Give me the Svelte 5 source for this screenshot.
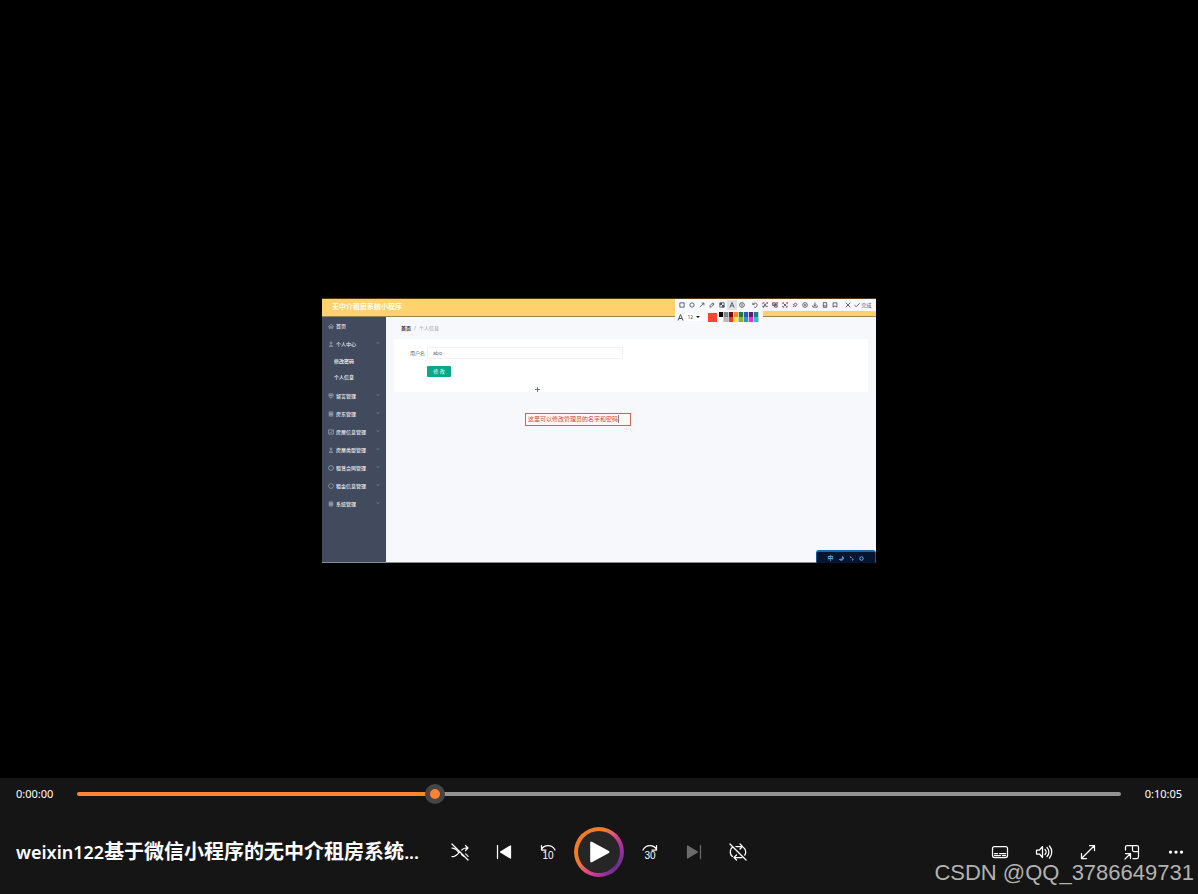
<script>
  let position = $state(34);
  let userName = $state('abo');

  const menu = [
    { label: '首页', icon: 'home', chevron: null },
    { label: '个人中心', icon: 'user', chevron: 'up', children: ['修改密码', '个人信息'] },
    { label: '留言管理', icon: 'shield', chevron: 'down' },
    { label: '房东管理', icon: 'list', chevron: 'down' },
    { label: '房屋信息管理', icon: 'check', chevron: 'down' },
    { label: '房屋类型管理', icon: 'user', chevron: 'down' },
    { label: '租赁合同管理', icon: 'circle', chevron: 'down' },
    { label: '租金信息管理', icon: 'power', chevron: 'down' },
    { label: '系统管理', icon: 'list', chevron: 'down' }
  ];

  const menuIcons = {
    home: 'M1 6 5 2l4 4M2 5v4h2V6h2v3h2V5',
    user: 'M5 1.5a1.6 1.6 0 1 1 0 3.3 1.6 1.6 0 0 1 0-3.3M1.5 9h7M2.5 8.5C3 6 7 6 7.500 8.500',
    shield: 'M1.500 1.500h7v4L5 9 1.500 5.500zM2 4h6M5 2v6',
    list: 'M2 1.500h6v7H2zM2 4h6M2 6h6M5 2v6',
    check: 'M1 1.500h8v7H1zM3 5l1.500 1.500L8 3',
    circle: 'M5 1a4 4 0 1 1 0 8 4 4 0 0 1 0-8',
    power: 'M3.500 1.300a4 4 0 1 0 3 0M5 0v2'
  };

  const tools = [
    { name: '矩形', d: 'M2 2h10v10H2z' },
    { name: '椭圆', d: 'M7 2a5 5 0 1 1 0 10A5 5 0 0 1 7 2' },
    { name: '箭头', d: 'M2 12 11 3M6 2.500h5.500V8' },
    { name: '画笔', d: 'M2 12l1-4 6-6 3 3-6 6zM8 4l3 3' },
    { name: '马赛克', d: 'M2 2h10v10H2z', fill: 'M2 2h5v5H2zM7 7h5v5H7z' },
    { name: '文字', d: 'M2 13 7 1l5 12M4 9h6', active: true },
    { name: '序号', d: 'M7 1.500a5.500 5.500 0 1 1 0 11 5.500 5.500 0 0 1 0-11M6 5l1-1v6' },
    { name: '撤销', d: 'M2 2v4h4M2.500 5.500A5 5 0 1 1 5 12', gap: true },
    { name: '识别文字', d: 'M2 5V2h3M2 9v3h3M12 9v3M4 11l3-7 3 7M5 9h4', hot: true },
    { name: '翻译', d: 'M1 2h7v6H1zM6 6h6v6H6zM3 5h3M8 9h3', hot: true },
    { name: '扫码', d: 'M2 5V2h3M2 9v3h3M12 9v3H9M4 4l6 6M10 4l-6 6', hot: true },
    { name: '固定', d: 'M8 2l4 4-2 1-2 4-5-5 4-2zM5 9l-3 3' },
    { name: '录屏', d: 'M7 1.500a5.500 5.500 0 1 1 0 11 5.500 5.500 0 0 1 0-11', fill: 'M5 5h4v4H5z' },
    { name: '下载', d: 'M7 1v8M4 6l3 3 3-3M2 8v4h10V8' },
    { name: '发送到手机', d: 'M3 1.500h8v11H3zM3 9h8' },
    { name: '收藏', d: 'M2.500 2h9v10L7 9l-4.500 3z' },
    { name: '关闭', d: 'M2 2l10 10M12 2 2 12', gap: true }
  ];

  const swatches = [
    '#050505', '#828282', '#7c0d0d', '#ef8734', '#267a32', '#2b56c4', '#6b1676', '#0f8585',
    '#ffffff', '#b9b9b9', '#ea3a36', '#fff01f', '#8db71c', '#3d8ad6', '#e22fe6', '#25c4cb'
  ];
</script>

<main class="player">
  <section class="stage" aria-label="视频画面">
    <div class="video">
      <header class="app-head">无中介租房系统小程序</header>
      <div class="app-body">
        <nav class="side">
          {#each menu as item}
            <button class="side-row">
              <svg viewBox="0 0 10 10" class="side-icon"><path d={menuIcons[item.icon]} /></svg>
              <span>{item.label}</span>
              {#if item.chevron}
                <svg viewBox="0 0 6 6" class="chevron"><path d={item.chevron === 'up' ? 'M1 4l2-2 2 2' : 'M1 2l2 2 2-2'} /></svg>
              {/if}
            </button>
            {#if item.children}
              <div class="side-sub">
                {#each item.children as child}<button>{child}</button>{/each}
              </div>
            {/if}
          {/each}
        </nav>
        <div class="content">
          <div class="crumbs"><b>首页</b><span>/</span><span>个人信息</span></div>
          <form class="card" onsubmit={(e) => e.preventDefault()}>
            <div class="field">
              <label for="user-name">用户名</label>
              <input id="user-name" bind:value={userName} />
            </div>
            <button class="submit">修 改</button>
          </form>
        </div>
      </div>

      <div class="annotation">这里可以修改管理员的名字和密码<i></i></div>
      <svg class="pointer" viewBox="0 0 6 6"><path d="M3 0v6M0 3h6" /></svg>

      <div class="shot-bar">
        {#each tools as tool}
          <button class:active={tool.active} class:gap={tool.gap} aria-label={tool.name}>
            <svg viewBox="0 0 14 14">
              <path d={tool.d} />
              {#if tool.fill}<path class="solid" d={tool.fill} />{/if}
              {#if tool.hot}<circle class="hot" cx="12" cy="2.500" r="2.500" />{/if}
            </svg>
          </button>
        {/each}
        <button class="done"><svg viewBox="0 0 14 14"><path d="M1 7l4 4 8-8" /></svg>完成</button>
      </div>
      <div class="shot-options">
        <svg viewBox="0 0 14 14"><path d="M2 13 7 1l5 12M4 9h6" /></svg>
        <button class="size">12<i></i></button>
        <span class="current"></span>
        <div class="swatches">
          {#each swatches as color}<span style:background={color}></span>{/each}
        </div>
      </div>

      <div class="ime">
        <span>中</span>
        <svg viewBox="0 0 10 10"><path d="M7 1c1 4-2 7-6 6 3 3 8 1 8-3 0-1-1-2-2-3z" /></svg>
        <svg viewBox="0 0 10 10"><path d="M2 2h2v2M6 6h2v2l-1 1" /></svg>
        <svg viewBox="0 0 10 10"><circle cx="5" cy="5" r="3.500" /></svg>
      </div>
    </div>
  </section>

  <section class="bar" aria-label="播放控制">
    <div class="timeline">
      <span>0:00:00</span>
      <input type="range" min="0" max="100" aria-label="播放进度" bind:value={position} style:--pos="{position}%" />
      <span class="total">0:10:05</span>
    </div>
    <div class="controls">
      <h1><span>weixin122</span>基于微信小程序的无中介租房系统<span>...</span></h1>
      <div class="group">
        <button aria-label="随机播放">
          <svg viewBox="0 0 20 20"><path d="M2 14.500h1.500c4.500 0 7-8 12-8.500H18M15.500 3.500 18 6l-2.500 2.500M2 6c3 0 5 2 6.500 4M11.500 12.500c1.500 1.500 3 2 4 2H18M18 14.500 15.500 12" /><path class="slash" d="M3.500 2l15 15" /><path d="M2 2l16 16" /></svg>
        </button>
        <button aria-label="上一个">
          <svg viewBox="0 0 20 20"><path d="M3.500 3.500v13" /><path class="solid" d="M16.500 4v12L6.500 10z" /></svg>
        </button>
        <button aria-label="后退 10 秒">
          <svg viewBox="0 0 20 20"><path d="M3.500 3.500V8H8M3.500 7.500C6 2.500 14 2 17 8" /><text x="10" y="17">10</text></svg>
        </button>
        <button class="play" aria-label="播放">
          <svg viewBox="0 0 20 20"><path class="solid" d="M3 1.500v17L18.500 10z" /></svg>
        </button>
        <button aria-label="前进 30 秒">
          <svg viewBox="0 0 20 20"><path d="M16.500 3.500V8H12M16.500 7.500C14 2.500 6 2 3 8" /><text x="10" y="17">30</text></svg>
        </button>
        <button class="off" aria-label="下一个">
          <svg viewBox="0 0 20 20"><path d="M16.500 3.500v13" /><path class="solid" d="M3.500 4v12l10-6z" /></svg>
        </button>
        <button aria-label="重复">
          <svg viewBox="0 0 20 20"><path d="M6.500 4.500h7.500M5 5C1.500 6.500 1.500 13 4.500 14.500M14 15.500H6.500M15.500 5.500c3 2 3 7 0 9M12 2l2.500 2.500L12 7M8.500 13 6 15.500 8.500 18" /><path class="slash" d="M3.500 2l15 15" /><path d="M2 2l16 16" /></svg>
        </button>
      </div>
      <div class="group end">
        <button aria-label="字幕">
          <svg viewBox="0 0 20 20"><rect x="2.500" y="4.500" width="15" height="11" rx="2" /><path d="M4.500 11.500h3M9.500 11.500h6M4.500 13.500h6M12.500 13.500h3" /></svg>
        </button>
        <button aria-label="音量">
          <svg viewBox="0 0 20 20"><path d="M2.500 8v4h3l3 3.500v-11L5.500 8zM11 7.500c1.500 1.500 1.500 3.500 0 5M13 5.500c2.500 2.500 2.500 6.500 0 9M15.500 4c3 3.500 3 8.500 0 12" /></svg>
        </button>
        <button aria-label="全屏">
          <svg viewBox="0 0 20 20"><path d="M3.500 16.500l13-13M11.500 3.500h5v5M3.500 11.500v5h5" /></svg>
        </button>
        <button aria-label="迷你播放">
          <svg viewBox="0 0 20 20"><path d="M3.500 8V5q0-1.500 1.500-1.500h10q1.500 0 1.500 1.500v9.500q0 2-1.500 2h-4M10.500 3.500V8q0 1.500 1.500 1.500h4.500M3.500 11.500h5v5M8.500 11.500l-5.500 5.500" /></svg>
        </button>
        <button aria-label="更多">
          <svg viewBox="0 0 20 20"><circle class="solid" cx="4.500" cy="10" r="1" /><circle class="solid" cx="10" cy="10" r="1" /><circle class="solid" cx="15.500" cy="10" r="1" /></svg>
        </button>
      </div>
    </div>
    <div class="mark">CSDN @QQ_3786649731</div>
  </section>
</main>

<style>
  :global(body) {
    margin: 0;
    background: #000;
  }
  * {
    box-sizing: border-box;
  }
  button {
    margin: 0;
    padding: 0;
    border: 0;
    background: none;
    color: inherit;
    font: inherit;
    cursor: pointer;
  }
  svg {
    display: block;
    fill: none;
    stroke: currentColor;
  }
  .player {
    min-height: 100vh;
    display: grid;
    grid-template-rows: 1fr auto;
    font-family: 'Noto Sans', 'Noto Sans CJK SC', sans-serif;
    color: #fff;
  }
  .stage {
    display: grid;
    place-items: center;
    padding-top: 82px;
  }

  .video {
    position: relative;
    width: min(554px, 100%);
    min-height: 265px;
    display: flex;
    flex-direction: column;
    background: #f6f8fb;
    border-top: 1px solid #4d3a14;
    border-bottom: 1px solid #8b8d90;
    font-size: 5px;
    line-height: 8px;
  }
  .app-head {
    height: 18px;
    padding-left: 10px;
    background: #ffd26e;
    border-bottom: 1px solid #a0864c;
    color: #fffdf5;
    font-size: 7px;
    font-weight: 700;
    line-height: 16px;
  }
  .app-body {
    flex: 1;
    display: grid;
    grid-template-columns: 64px 1fr;
  }
  .side {
    background: #424b5e;
    color: #e6eaf0;
    font-weight: 500;
  }
  .side-row {
    width: 100%;
    height: 18px;
    padding: 0 6px;
    display: flex;
    align-items: center;
    gap: 2px;
    text-align: left;
  }
  .side-row span {
    flex: 1;
    white-space: nowrap;
  }
  .side-icon {
    width: 6px;
    height: 6px;
    color: #b3bac6;
  }
  .chevron {
    width: 4px;
    height: 4px;
    margin-bottom: 2px;
    color: #8d96a5;
  }
  .side-sub {
    display: grid;
    padding: 0 0 2px 12px;
  }
  .side-sub button {
    height: 16px;
    text-align: left;
    color: #fff;
  }
  .content {
    padding: 7px 8px;
  }
  .crumbs {
    display: flex;
    gap: 3px;
    padding-left: 7px;
    color: #8e9aa8;
  }
  .crumbs b {
    color: #303338;
  }
  .card {
    margin-top: 7px;
    height: 53px;
    padding: 8px 8px 8px 16px;
    background: #fff;
  }
  .field {
    display: grid;
    grid-template-columns: 17px minmax(0, 196px);
    align-items: center;
    color: #606266;
  }
  .field label {
    white-space: nowrap;
  }
  .field input {
    height: 12px;
    padding: 0 5px;
    border: 1px solid #f0f1f3;
    border-radius: 1px;
    background: #fff;
    color: #606266;
    font: inherit;
  }
  .submit {
    width: 24px;
    height: 11px;
    margin: 7px 0 0 17px;
    border-radius: 1px;
    background: #06a98c;
    color: #fff;
    display: block;
  }

  .annotation {
    position: absolute;
    left: 203px;
    top: 114px;
    width: 106px;
    height: 13px;
    padding-left: 2px;
    display: flex;
    align-items: center;
    border: 1px solid #d0625a;
    background: #fbf8f8;
    color: #d8423a;
    font-size: 6px;
    white-space: nowrap;
  }
  .annotation i {
    width: 1px;
    height: 8px;
    background: #7b8391;
  }
  .pointer {
    position: absolute;
    left: 213px;
    top: 88px;
    width: 5px;
    height: 5px;
    color: #4b6173;
  }

  .shot-bar {
    position: absolute;
    top: 0;
    right: 0;
    width: 201px;
    height: 12px;
    padding-left: 2px;
    display: flex;
    align-items: center;
    background: #f7f9fc;
    color: #4a505b;
    white-space: nowrap;
  }
  .shot-bar button {
    flex: none;
    width: 10px;
    height: 10px;
    display: flex;
    align-items: center;
    justify-content: center;
  }
  .shot-bar .gap {
    margin-left: 3px;
  }
  .shot-bar .active {
    background: #dfe3e9;
  }
  .shot-bar svg {
    flex: none;
    width: 6px;
    height: 6px;
    stroke-width: 2;
  }
  .shot-bar .solid {
    fill: currentColor;
    stroke: none;
  }
  .shot-bar .hot {
    fill: #f0622d;
    stroke: none;
  }
  .shot-bar .done {
    width: 20px;
    gap: 1px;
  }
  .shot-options {
    position: absolute;
    right: 113px;
    top: 12px;
    width: 88px;
    height: 13px;
    padding-left: 2px;
    display: flex;
    align-items: center;
    background: #f7f9fc;
    color: #4a505b;
  }
  .shot-options svg {
    width: 7px;
    height: 7px;
    stroke-width: 2;
  }
  .size {
    width: 17px;
    height: 8px;
    margin: 0 6px 0 1px;
    display: flex;
    align-items: center;
    justify-content: space-evenly;
    background: #fff;
  }
  .size i {
    border: 2px solid transparent;
    border-top-color: #15181d;
    border-bottom: 0;
  }
  .current {
    width: 9px;
    height: 9px;
    background: #fa4632;
  }
  .swatches {
    display: grid;
    grid-template-columns: repeat(8, 5px);
    grid-auto-rows: 5px;
    margin-left: 2px;
  }
  .swatches span {
    border-right: 1px solid #c9ccd2;
  }

  .ime {
    position: absolute;
    right: 0;
    bottom: -1px;
    width: 60px;
    height: 13px;
    padding: 2px 8px 0;
    display: flex;
    align-items: center;
    justify-content: space-around;
    border: 1px solid #11589a;
    border-top: 2px solid #1a69b0;
    border-bottom: 0;
    border-radius: 3px 3px 0 0;
    background: #06152f;
    color: #5cabf0;
    font-size: 6px;
    font-weight: 700;
  }
  .ime svg {
    width: 5px;
    height: 5px;
    stroke-width: 2;
  }

  .bar {
    position: relative;
    background: #151515;
  }
  .timeline {
    height: 32px;
    padding: 0 16px;
    display: grid;
    grid-template-columns: 61px 1fr 61px;
    align-items: center;
    font-size: 11px;
    line-height: 16px;
  }
  .total {
    text-align: right;
  }
  input[type='range'] {
    appearance: none;
    width: 100%;
    height: 20px;
    margin: 0;
    background: none;
  }
  input[type='range']::-webkit-slider-runnable-track {
    height: 4px;
    border-radius: 2px;
    background: linear-gradient(90deg, #ff8432 var(--pos), #939393 var(--pos));
  }
  input[type='range']::-webkit-slider-thumb {
    appearance: none;
    width: 20px;
    height: 20px;
    margin-top: -8px;
    border: 5px solid #454545;
    border-radius: 50%;
    background: #ff8432;
  }
  .controls {
    height: 84px;
    display: grid;
    grid-template-columns: minmax(0, 1fr) auto minmax(0, 1fr);
    align-items: center;
  }
  h1 {
    margin: 0;
    padding-left: 16px;
    font-size: 20px;
    font-weight: 700;
    line-height: 28px;
    white-space: nowrap;
  }
  h1 span {
    font-size: 18px;
    font-weight: 600;
  }
  .group {
    display: flex;
    align-items: center;
  }
  .end {
    justify-content: flex-end;
  }
  .group button {
    width: 44px;
    height: 44px;
    display: grid;
    place-items: center;
  }
  .group svg {
    width: 20px;
    height: 20px;
    stroke-width: 1.25;
    stroke-linecap: round;
    stroke-linejoin: round;
  }
  .group .solid {
    fill: currentColor;
  }
  .group .slash {
    stroke: #151515;
    stroke-width: 2;
  }
  .group text {
    fill: currentColor;
    stroke: none;
    font-family: 'Liberation Sans', sans-serif;
    font-size: 10px;
    text-anchor: middle;
  }
  .group .off {
    color: #6b6b6b;
  }
  .group .play {
    width: 50px;
    height: 50px;
    margin: 0 4px;
    border: 4px solid transparent;
    border-radius: 50%;
    background:
      linear-gradient(#262626, #262626) padding-box,
      conic-gradient(#f07c2a 0deg 15deg, #e0567c 40deg, #c03595 60deg, #8d3197 90deg, #6a2f8c 130deg, #8c3098 160deg, #c0359a 185deg, #de4a85 210deg, #f07040 235deg, #f07c2a 255deg) border-box;
  }
  .group .play svg {
    width: 22px;
    height: 22px;
    stroke-width: 2;
  }
  .mark {
    position: absolute;
    right: 4px;
    bottom: 7px;
    color: #b2b2b2;
    font-family: 'Liberation Sans', sans-serif;
    font-size: 22px;
    line-height: 28px;
    pointer-events: none;
  }
</style>
